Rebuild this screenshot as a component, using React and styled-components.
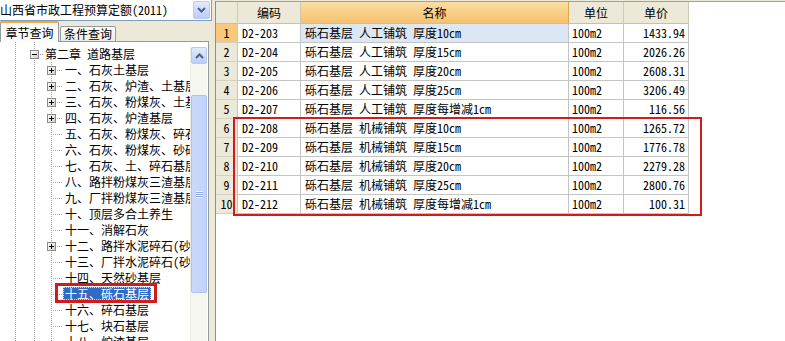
import React from 'react';
import styled, { createGlobalStyle } from 'styled-components';

const GlobalStyle = createGlobalStyle`
    html, body {
        margin: 0;
        padding: 0;
        background: #fff;
    }
    body {
        font-family: "Noto Sans Mono CJK SC", "Noto Sans CJK SC", "DejaVu Sans", sans-serif;
        font-size: 12px;
        color: #000;
    }
`;

const Frame = styled.div`
    display: flex;
    width: 785px;
    height: 341px;
    overflow: hidden;
    background: #ece9d8;
`;

const LeftPane = styled.div`
    width: 212px;
    display: flex;
    flex-direction: column;
`;

const Combo = styled.div`
    height: 20px;
    display: flex;
    align-items: center;
    background: #fff;
    border-right: 1px solid #7f9db9;
    border-bottom: 1px solid #7f9db9;
`;

const ComboText = styled.div`
    flex: 1;
    white-space: nowrap;
    overflow: hidden;
    line-height: 20px;
`;

const ComboButton = styled.div`
    width: 15px;
    height: 16px;
    margin-right: 1px;
    border: 1px solid #b9cbf3;
    border-radius: 2px;
    background: linear-gradient(#e2ebfe, #b9cdf7);
    display: flex;
    align-items: center;
    justify-content: center;
`;

const TabBar = styled.div`
    height: 21px;
    display: flex;
    align-items: flex-end;
    position: relative;
    z-index: 1;
    margin-bottom: -1px;
`;

const Tab = styled.div`
    box-sizing: border-box;
    height: ${p => (p.$active ? 21 : 16)}px;
    width: ${p => (p.$active ? 59 : 56)}px;
    margin-left: ${p => (p.$active ? 0 : 1)}px;
    padding-top: ${p => (p.$active ? 1 : 0)}px;
    border: 1px solid #919b9c;
    border-bottom: ${p => (p.$active ? 'none' : '1px solid #919b9c')};
    border-top: ${p => (p.$active ? '2px solid #f4a93a' : '1px solid #919b9c')};
    border-radius: 2px 2px 0 0;
    background: ${p => (p.$active ? '#fcfcfe' : 'linear-gradient(#fff, #ecebe5)')};
    text-align: center;
    line-height: ${p => (p.$active ? 17 : 14)}px;
    white-space: nowrap;
`;

const TreePanel = styled.div`
    flex: 1;
    width: 209px;
    box-sizing: border-box;
    display: flex;
    background: #fff;
    border-top: 1px solid #919b9c;
    border-right: 1px solid #919b9c;
    overflow: hidden;
`;

const TreeBody = styled.div`
    flex: 1;
    min-width: 0;
    overflow: hidden;
`;

const TreeRow = styled.div`
    display: flex;
    height: ${p => p.$h || 16}px;
    white-space: nowrap;
`;

const Guide = styled.span`
    flex: none;
    width: ${p => p.$w}px;
    height: 100%;
    box-sizing: border-box;
    padding-left: ${p => p.$x - 4}px;
    display: flex;
    align-items: center;
    background-image: ${p => (p.$line ? 'repeating-linear-gradient(to bottom, #a3a3a3 0 1px, transparent 1px 2px)' : 'none')}
        ${p => (p.$branch ? ', repeating-linear-gradient(to right, #a3a3a3 0 1px, transparent 1px 2px)' : '')};
    background-repeat: no-repeat;
    background-size: 1px 100% ${p => (p.$branch ? `, ${p.$w - p.$x}px 1px` : '')};
    background-position: ${p => p.$x}px 0 ${p => (p.$branch ? `, ${p.$x}px 8px` : '')};
`;

const Label = styled.span`
    display: inline-block;
    height: ${p => (p.$selected ? 13 : 14)}px;
    line-height: 13px;
    padding: 0 2px;
    margin-top: ${p => (p.$selected ? 0 : 1)}px;
    box-sizing: border-box;
    color: ${p => (p.$selected ? '#fff' : '#000')};
    background: ${p => (p.$selected ? '#316ac5' : 'transparent')};
    outline: ${p => (p.$selected ? '1px dotted #e8dc98' : 'none')};
    outline-offset: -1px;
    vertical-align: top;
`;

const Marked = styled.span`
    display: inline-block;
    border: 3px solid #d61a1a;
    padding: 1px 3px 0 5px;
    margin: -3px -6px 0 -8px;
    height: 20px;
    box-sizing: border-box;
    line-height: 13px;
`;

const ScrollBar = styled.div`
    width: 16px;
    margin: 5px 1px 0 0;
    display: flex;
    flex-direction: column;
    background: #f6f6f1;
    border-left: 1px solid #eeede5;
`;

const ScrollButton = styled.div`
    height: 15px;
    border: 1px solid #b9cbf3;
    border-radius: 2px;
    background: linear-gradient(#e2ebfe, #b9cdf7);
    display: flex;
    align-items: center;
    justify-content: center;
`;

const ScrollThumb = styled.div`
    margin-top: 31px;
    height: 196px;
    border: 1px solid #adc1f3;
    border-radius: 2px;
    background: linear-gradient(to right, #cad8fb, #c2d2fa);
    display: flex;
    align-items: center;
    justify-content: center;
`;

const Grip = styled.div`
    width: 7px;
    height: 7px;
    background: repeating-linear-gradient(to bottom, #eef3fe 0 1px, #8da8e6 1px 2px);
`;

const RightPane = styled.div`
    flex: 1;
    margin: 1px 0 0 3px;
    background: #fff;
    border-left: 1px solid #8e8e8e;
    border-top: 1px solid #a0a0a0;
`;

const Grid = styled.div`
    position: relative;
    display: grid;
    grid-template-columns: 22px 63px 268px 55px 65px;
    width: max-content;
`;

const HeadCell = styled.div`
    height: 22px;
    box-sizing: border-box;
    border-right: 1px solid ${p => (p.$hot ? '#e0a64a' : '#cdcab8')};
    border-bottom: 1px solid #c4c1b0;
    background: ${p => (p.$hot ? 'linear-gradient(#fbdda2, #f6c26e)' : '#ece9d8')};
    text-align: center;
    line-height: 21px;
`;

const NumCell = styled.div`
    height: 19px;
    box-sizing: border-box;
    border-right: 1px solid #c8c5b4;
    border-bottom: 1px solid #d4d1c0;
    background: ${p => (p.$hot ? '#f7c97c' : '#ece9d8')};
    text-align: center;
    line-height: 18px;
`;

const Cell = styled.div`
    height: 19px;
    box-sizing: border-box;
    border-right: 1px solid #c4c4c4;
    border-bottom: 1px solid #c4c4c4;
    background: ${p => (p.$selected ? '#dce7f5' : '#fff')};
    text-align: ${p => p.$align || 'left'};
    padding: 0 ${p => (p.$align === 'right' ? 3 : 0)}px 0 ${p => (p.$align === 'right' ? 0 : p.$pad || 4)}px;
    line-height: 18px;
    white-space: nowrap;
    overflow: hidden;
`;

const RedFrame = styled.div`
    position: absolute;
    left: 17px;
    top: 115px;
    width: 469px;
    height: 99px;
    box-sizing: border-box;
    border: 2px solid #d61a1a;
    pointer-events: none;
`;

const Chevron = ({ up }) => (
    <svg width="9" height="6" viewBox="0 0 9 6">
        <path
            d={up ? 'M1 5 L4.5 1.5 L8 5' : 'M1 1 L4.5 4.5 L8 1'}
            fill="none"
            stroke="#4d6185"
            strokeWidth="2"
        />
    </svg>
);

const Expander = ({ open }) => (
    <svg width="9" height="9" viewBox="0 0 9 9">
        <defs>
            <linearGradient id="exp" x1="0" y1="0" x2="1" y2="1">
                <stop offset="0" stopColor="#fff" />
                <stop offset="1" stopColor="#cfcfc4" />
            </linearGradient>
        </defs>
        <rect x="0.5" y="0.5" width="8" height="8" fill="url(#exp)" stroke="#8c8c8c" />
        <path d="M2 4.5 H7" stroke="#000" />
        {!open && <path d="M4.5 2 V7" stroke="#000" />}
    </svg>
);

const sections = [
    ['一、石灰土基层', true],
    ['二、石灰、炉渣、土基层', true],
    ['三、石灰、粉煤灰、土基层', true],
    ['四、石灰、炉渣基层', true],
    ['五、石灰、粉煤灰、碎石基层', false],
    ['六、石灰、粉煤灰、砂砾基层', false],
    ['七、石灰、土、碎石基层', false],
    ['八、路拌粉煤灰三渣基层', false],
    ['九、厂拌粉煤灰三渣基层', false],
    ['十、顶层多合土养生', false],
    ['十一、消解石灰', false],
    ['十二、路拌水泥碎石(砂砾)基层', true],
    ['十三、厂拌水泥碎石(砂砾)基层', false],
    ['十四、天然砂基层', false],
    ['十五、砾石基层', false],
    ['十六、碎石基层', false],
    ['十七、块石基层', false],
    ['十八、炉渣基层', false],
];

const rows = [
    ['D2-203', '砾石基层 人工铺筑 厚度10cm', '100m2', '1433.94'],
    ['D2-204', '砾石基层 人工铺筑 厚度15cm', '100m2', '2026.26'],
    ['D2-205', '砾石基层 人工铺筑 厚度20cm', '100m2', '2608.31'],
    ['D2-206', '砾石基层 人工铺筑 厚度25cm', '100m2', '3206.49'],
    ['D2-207', '砾石基层 人工铺筑 厚度每增减1cm', '100m2', '116.56'],
    ['D2-208', '砾石基层 机械铺筑 厚度10cm', '100m2', '1265.72'],
    ['D2-209', '砾石基层 机械铺筑 厚度15cm', '100m2', '1776.78'],
    ['D2-210', '砾石基层 机械铺筑 厚度20cm', '100m2', '2279.28'],
    ['D2-211', '砾石基层 机械铺筑 厚度25cm', '100m2', '2800.76'],
    ['D2-212', '砾石基层 机械铺筑 厚度每增减1cm', '100m2', '100.31'],
];

const SELECTED = '十五、砾石基层';

function Tree() {
    return (
        <TreeBody>
            <TreeRow $h={4}>
                <Guide $w={26} $x={15} $line />
                <Guide $w={17} $x={8} $line />
            </TreeRow>
            <TreeRow>
                <Guide $w={26} $x={15} $line />
                <Guide $w={17} $x={8} $line $branch>
                    <Expander open />
                </Guide>
                <Label>第二章 道路基层</Label>
            </TreeRow>
            {sections.map(([text, plus]) => (
                <TreeRow key={text}>
                    <Guide $w={26} $x={15} $line />
                    <Guide $w={17} $x={8} $line />
                    <Guide $w={20} $x={8} $line $branch>
                        {plus && <Expander />}
                    </Guide>
                    {text === SELECTED ? (
                        <Marked>
                            <Label $selected>{text}</Label>
                        </Marked>
                    ) : (
                        <Label>{text}</Label>
                    )}
                </TreeRow>
            ))}
        </TreeBody>
    );
}

function App() {
    return (
        <Frame>
            <GlobalStyle />
            <LeftPane>
                <Combo>
                    <ComboText>山西省市政工程预算定额(2011)</ComboText>
                    <ComboButton>
                        <Chevron />
                    </ComboButton>
                </Combo>
                <TabBar>
                    <Tab $active>章节查询</Tab>
                    <Tab>条件查询</Tab>
                </TabBar>
                <TreePanel>
                    <Tree />
                    <ScrollBar>
                        <ScrollButton>
                            <Chevron up />
                        </ScrollButton>
                        <ScrollThumb>
                            <Grip />
                        </ScrollThumb>
                    </ScrollBar>
                </TreePanel>
            </LeftPane>
            <RightPane>
                <Grid>
                    <HeadCell />
                    <HeadCell>编码</HeadCell>
                    <HeadCell $hot>名称</HeadCell>
                    <HeadCell>单位</HeadCell>
                    <HeadCell>单价</HeadCell>
                    {rows.map(([code, name, unit, price], i) => (
                        <React.Fragment key={code}>
                            <NumCell $hot={i === 0}>{i + 1}</NumCell>
                            <Cell>{code}</Cell>
                            <Cell $selected={i === 0}>{name}</Cell>
                            <Cell $pad={3}>{unit}</Cell>
                            <Cell $align="right">{price}</Cell>
                        </React.Fragment>
                    ))}
                    <RedFrame />
                </Grid>
            </RightPane>
        </Frame>
    );
}

export default App;
